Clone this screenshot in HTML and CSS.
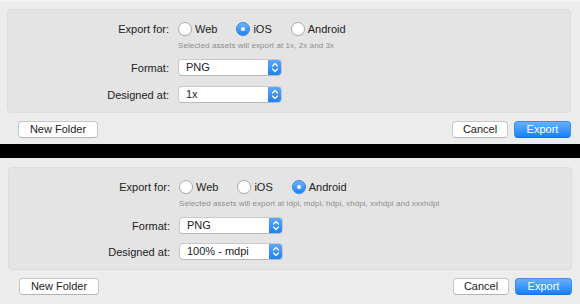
FILE: index.html
```html
<!DOCTYPE html>
<html>
<head>
<meta charset="utf-8">
<link rel="stylesheet" href="styles.css">
</head>
<body>
<div class="panel panel--a">
  <div class="box">
    <div class="row row--radio">
      <div class="label">Export for:</div>
      <div class="radios">
        <span class="radio"><span class="dot"></span>Web</span>
        <span class="radio"><span class="dot on"></span>iOS</span>
        <span class="radio"><span class="dot"></span>Android</span>
      </div>
    </div>
    <div class="row row--hint">
      <div class="label"></div>
      <div class="hint">Selected assets will export at 1x, 2x and 3x</div>
    </div>
    <div class="row row--format">
      <div class="label">Format:</div>
      <div class="popup"><span class="ptext">PNG</span><span class="pbtn"><svg width="8" height="11" viewBox="0 0 8 11"><path d="M1.5 4 L4 1.5 L6.5 4 M1.5 7 L4 9.5 L6.5 7" fill="none" stroke="#fff" stroke-width="1.2" stroke-linecap="round" stroke-linejoin="round"/></svg></span></div>
    </div>
    <div class="row row--design">
      <div class="label">Designed at:</div>
      <div class="popup"><span class="ptext">1x</span><span class="pbtn"><svg width="8" height="11" viewBox="0 0 8 11"><path d="M1.5 4 L4 1.5 L6.5 4 M1.5 7 L4 9.5 L6.5 7" fill="none" stroke="#fff" stroke-width="1.2" stroke-linecap="round" stroke-linejoin="round"/></svg></span></div>
    </div>
  </div>
  <div class="actions">
    <button class="btn btn--folder">New Folder</button>
    <div class="spacer"></div>
    <button class="btn btn--cancel">Cancel</button>
    <button class="btn btn--primary">Export</button>
  </div>
</div>
<div class="divider"></div>
<div class="panel panel--b">
  <div class="box">
    <div class="row row--radio">
      <div class="label">Export for:</div>
      <div class="radios">
        <span class="radio"><span class="dot"></span>Web</span>
        <span class="radio"><span class="dot"></span>iOS</span>
        <span class="radio"><span class="dot on"></span>Android</span>
      </div>
    </div>
    <div class="row row--hint">
      <div class="label"></div>
      <div class="hint">Selected assets will export at ldpi, mdpi, hdpi, xhdpi, xxhdpi and xxxhdpi</div>
    </div>
    <div class="row row--format">
      <div class="label">Format:</div>
      <div class="popup"><span class="ptext">PNG</span><span class="pbtn"><svg width="8" height="11" viewBox="0 0 8 11"><path d="M1.5 4 L4 1.5 L6.5 4 M1.5 7 L4 9.5 L6.5 7" fill="none" stroke="#fff" stroke-width="1.2" stroke-linecap="round" stroke-linejoin="round"/></svg></span></div>
    </div>
    <div class="row row--design">
      <div class="label">Designed at:</div>
      <div class="popup"><span class="ptext">100% - mdpi</span><span class="pbtn"><svg width="8" height="11" viewBox="0 0 8 11"><path d="M1.5 4 L4 1.5 L6.5 4 M1.5 7 L4 9.5 L6.5 7" fill="none" stroke="#fff" stroke-width="1.2" stroke-linecap="round" stroke-linejoin="round"/></svg></span></div>
    </div>
  </div>
  <div class="actions">
    <button class="btn btn--folder">New Folder</button>
    <div class="spacer"></div>
    <button class="btn btn--cancel">Cancel</button>
    <button class="btn btn--primary">Export</button>
  </div>
</div>
</body>
</html>
```
FILE: styles.css
```css
* { box-sizing: border-box; }
html, body { margin: 0; padding: 0; }
body {
  width: 580px;
  height: 304px;
  background: #000;
  font-family: "Liberation Sans", Arial, sans-serif;
  font-size: 11px;
  color: #222;
  overflow: hidden;
}
.panel {
  background: #ececec;
  display: flex;
  flex-direction: column;
}
.panel--a {
  height: 144px;
  padding: 7px 9px 0 7px;
  border-top: 2px solid #f5f5f5;
}
.panel--b {
  height: 146px;
  padding: 9px 8px 0 8px;
}
.divider { height: 14px; background: #000; }
.box {
  height: 104px;
  background: #e4e4e4;
  border: 1px solid #dcdcdc;
  border-radius: 4px;
  padding-top: 12px;
  display: flex;
  flex-direction: column;
}
.panel--b .box { height: 103px; }
.row { display: flex; align-items: center; }
.label {
  width: 161px;
  text-align: right;
  margin-right: 9px;
  flex: none;
  white-space: nowrap;
}
.row--radio { height: 14px; }
.row--hint { height: 10px; margin-top: 5px; }
.row--format { height: 17px; margin-top: 8px; }
.row--design { height: 17px; margin-top: 10px; }
.panel--b .row--design { margin-top: 9px; }
.radios { display: flex; gap: 19px; }
.radio { display: inline-flex; align-items: center; gap: 3px; line-height: 14px; }
.dot {
  width: 14px;
  height: 14px;
  border-radius: 50%;
  background: #fff;
  border: 1px solid #acacac;
  box-shadow: 0 0.5px 0.5px rgba(0,0,0,0.08);
  position: relative;
  flex: none;
}
.dot.on {
  background: linear-gradient(#6cb2fb, #1f84fb);
  border-color: #2f86f0;
}
.dot.on::after {
  content: "";
  position: absolute;
  left: 4px;
  top: 4px;
  width: 4px;
  height: 4px;
  border-radius: 50%;
  background: #fff;
}
.hint {
  font-size: 8px;
  color: #8e8e8e;
  line-height: 10px;
  letter-spacing: 0.07px;
  white-space: nowrap;
}
.popup {
  width: 104px;
  height: 17px;
  display: flex;
  border-radius: 4px;
  background: #fff;
  border: 1px solid #c9c9c9;
  border-bottom-color: #b9b9b9;
  overflow: hidden;
}
.ptext { flex: 1; padding-left: 7px; line-height: 15px; }
.pbtn {
  width: 14px;
  background: linear-gradient(#62aafb, #1a7ef8);
  display: flex;
  align-items: center;
  justify-content: center;
  margin: -1px -1px -1px 0;
}
.actions {
  display: flex;
  margin-top: 8px;
  height: 17px;
}
.spacer { flex: 1; }
.btn {
  font-family: "Liberation Sans", Arial, sans-serif;
  font-size: 11px;
  height: 17px;
  padding: 0;
  border-radius: 4px;
  line-height: 15px;
  color: #222;
  background: #fff;
  border: 1px solid #c8c8c8;
  border-bottom-color: #b4b4b4;
}
.btn--folder { width: 80px; margin-left: 11px; }
.btn--cancel { width: 56px; }
.btn--primary {
  width: 57px;
  margin-left: 6px;
  color: #fff;
  background: linear-gradient(#68b0fb, #1581fb);
  border-color: #3a8cf0;
  border-bottom-color: #1c6fe0;
}
```
